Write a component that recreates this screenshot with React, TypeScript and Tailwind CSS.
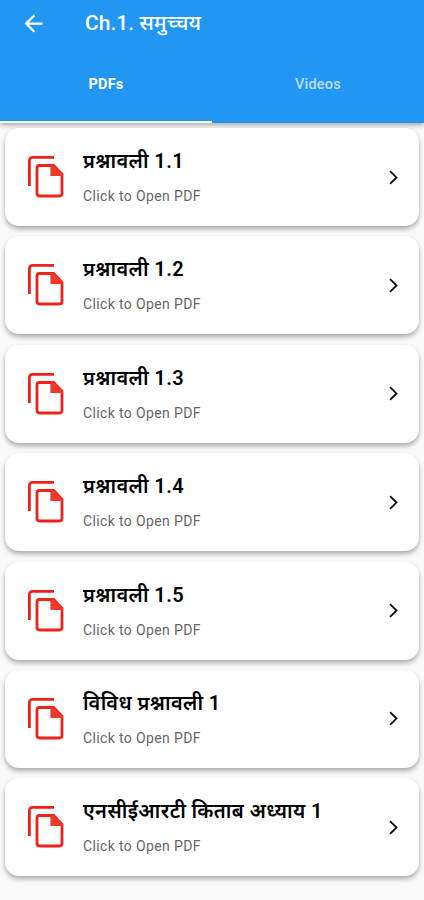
import { MdArrowBack, MdArrowForwardIos } from 'react-icons/md';
import { useState } from 'react';

const TABS = ['PDFs', 'Videos'];

const CHAPTERS = [
  'प्रश्नावली 1.1',
  'प्रश्नावली 1.2',
  'प्रश्नावली 1.3',
  'प्रश्नावली 1.4',
  'प्रश्नावली 1.5',
  'विविध प्रश्नावली 1',
  'एनसीईआरटी किताब अध्याय 1',
];

function CopyIcon() {
  return (
    <svg width="36" height="42" viewBox="0 0 36 42" fill="none" stroke="#ee2218" strokeWidth="2.8" className="shrink-0">
      <path d="M1.4 30V4.4a3 3 0 0 1 3-3H26" />
      <path d="M11.4 9.5H25.6L34 18.3V37.6a2.4 2.4 0 0 1-2.4 2.4H11.4A2.4 2.4 0 0 1 9 37.6V11.9a2.4 2.4 0 0 1 2.4-2.4Z" />
      <path d="M22.4 9.5V20H34.5V18.3L25.6 9.5Z" fill="#f23a2b" stroke="none" />
    </svg>
  );
}

function PdfCard({ title }: { title: string }) {
  return (
    <button className="flex h-[98px] w-full items-center rounded-[14px] bg-white pl-[23px] pr-[17px] text-left shadow-[0_3px_5px_rgba(0,0,0,0.32)]">
      <CopyIcon />
      <div className="ml-[19px] flex-1">
        <div className="whitespace-nowrap text-[20px] font-semibold leading-[24px] tracking-[0.4px] text-black">{title}</div>
        <div className="mt-[14px] text-[14px] leading-[18px] tracking-[0.37px] text-[#666]">Click to Open PDF</div>
      </div>
      <MdArrowForwardIos size={17} className="shrink-0 text-black" />
    </button>
  );
}

export default function App() {
  const [activeTab, setActiveTab] = useState('PDFs');

  return (
    <div className="h-[900px] w-full overflow-hidden bg-[#fafafa] font-[Roboto,'Noto_Sans',sans-serif]">
      <header className="h-[123px] bg-[#2196f3] text-white shadow-[0_2px_5px_rgba(0,0,0,0.35)]">
        <div className="flex h-[47px] items-center pl-[20px]">
          <MdArrowBack size={27} />
          <h1 className="ml-[38px] text-[21px] font-medium">Ch.1. समुच्चय</h1>
        </div>
        <div className="flex h-[76px]">
          {TABS.map(tab => (
            <button
              key={tab}
              onClick={() => setActiveTab(tab)}
              className={`flex-1 border-b-2 pt-[2px] text-[14.5px] tracking-[0.2px] ${activeTab === tab ? 'border-white font-bold' : 'border-transparent font-medium text-white/70'}`}
            >
              {tab}
            </button>
          ))}
        </div>
      </header>
      <main className="flex flex-col gap-[10.4px] px-[5px] pt-[5px]">
        {CHAPTERS.map(title => (
          <PdfCard key={title} title={title} />
        ))}
      </main>
    </div>
  );
}
